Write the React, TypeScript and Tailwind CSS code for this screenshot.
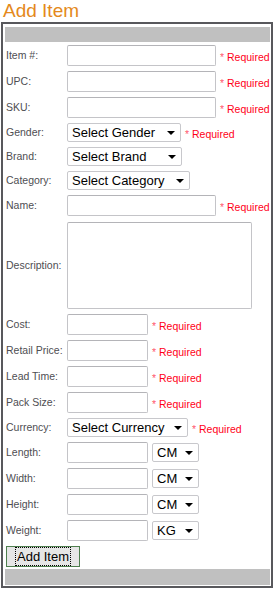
import type { ReactNode } from "react";

function Required() {
  return (
    <span className="ml-[4px] mt-[3px] whitespace-nowrap text-[10.5px] leading-none text-[#ff0018]">
      <span className="text-[#ff5a70]">*</span> Required
    </span>
  );
}

function Row({
  label,
  height,
  className = "",
  children,
}: {
  label: string;
  height: string;
  className?: string;
  children: ReactNode;
}) {
  return (
    <div className={`flex items-center ${height} ${className}`}>
      <label className="w-[62px] shrink-0 pl-[1px] text-[10.5px] leading-none whitespace-nowrap text-[#4e4e52]">
        {label}
      </label>
      {children}
    </div>
  );
}

function TextBox({ wide = true }: { wide?: boolean }) {
  return (
    <input
      type="text"
      className={`h-[21px] ${
        wide ? "w-[149px]" : "w-[81px]"
      } rounded-[2px] border border-[#c4c4c8] border-t-[#b4b4b8] bg-white outline-none`}
    />
  );
}

function Select({ text, width }: { text: string; width: string }) {
  return (
    <div
      className={`relative flex h-[19px] ${width} items-center rounded-[2px] border border-[#c8c8cc] bg-white pl-[4px] text-[13px] leading-none text-black`}
    >
      <span className="whitespace-nowrap">{text}</span>
      <svg
        className="absolute right-[5px] top-[7px]"
        width="8"
        height="4"
        viewBox="0 0 8 4"
      >
        <path d="M0 0h8L4 4z" fill="#000" />
      </svg>
    </div>
  );
}

export default function App() {
  return (
    <div className="min-h-[590px] bg-white font-['Liberation_Sans',Arial,sans-serif]">
      <h1 className="h-[22px] pl-[3px] text-[19px] leading-[22px] font-normal text-[#e4891c]">
        Add Item
      </h1>

      <div className="ml-[1px] w-[272px] border-2 border-[#58585c] pl-[2px] pr-[1px] pt-[3px] pb-[1px]">
        <div className="mb-[3px] h-[15px] bg-[#c0c0c0]" />

        <form className="flex flex-col gap-[5px]">
          <Row label="Item #:" height="h-[21px]">
            <TextBox />
            <Required />
          </Row>
          <Row label="UPC:" height="h-[21px]">
            <TextBox />
            <Required />
          </Row>
          <Row label="SKU:" height="h-[21px]">
            <TextBox />
            <Required />
          </Row>
          <Row label="Gender:" height="h-[19px]">
            <Select text="Select Gender" width="w-[114px]" />
            <Required />
          </Row>
          <Row label="Brand:" height="h-[19px]">
            <Select text="Select Brand" width="w-[115px]" />
          </Row>
          <Row label="Category:" height="h-[19px]">
            <Select text="Select Category" width="w-[123px]" />
          </Row>
          <Row label="Name:" height="h-[21px]">
            <TextBox />
            <Required />
          </Row>
          <Row label="Description:" height="h-[88px]" className="pt-[1px]">
            <textarea className="h-[87px] w-[185px] resize-none rounded-[2px] border border-[#c4c4c8] border-t-[#b4b4b8] bg-white outline-none" />
          </Row>
          <Row label="Cost:" height="h-[21px]">
            <TextBox wide={false} />
            <Required />
          </Row>
          <Row label="Retail Price:" height="h-[21px]">
            <TextBox wide={false} />
            <Required />
          </Row>
          <Row label="Lead Time:" height="h-[21px]">
            <TextBox wide={false} />
            <Required />
          </Row>
          <Row label="Pack Size:" height="h-[21px]">
            <TextBox wide={false} />
            <Required />
          </Row>
          <Row label="Currency:" height="h-[19px]">
            <Select text="Select Currency" width="w-[121px]" />
            <Required />
          </Row>
          {[
            ["Length:", "CM"],
            ["Width:", "CM"],
            ["Height:", "CM"],
            ["Weight:", "KG"],
          ].map(([label, unit]) => (
            <Row key={label} label={label} height="h-[21px]">
              <TextBox wide={false} />
              <div className="ml-[4px]">
                <Select text={unit} width="w-[47px]" />
              </div>
            </Row>
          ))}
          <div className="pl-[1px]">
            <button
              type="button"
              className="flex h-[21px] w-[74px] items-center justify-center border border-[#4f7f4f] bg-[#e6e6e6] text-[13px] leading-none text-black"
            >
              <span className="border border-dotted border-black px-[1px] py-[2px]">
                Add Item
              </span>
            </button>
          </div>
        </form>

        <div className="mt-[2px] h-[16px] bg-[#c0c0c0]" />
      </div>
    </div>
  );
}
